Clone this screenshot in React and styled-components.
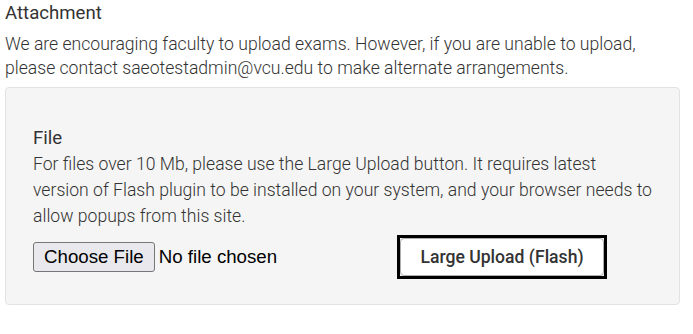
import React from "react";
import styled, { createGlobalStyle } from "styled-components";

const GlobalStyle = createGlobalStyle`
  body {
    margin: 0;
    background: #ffffff;
    font-family: Roboto, "Liberation Sans", sans-serif;
  }
`;

const Page = styled.div`
  padding: 0 5px;
  width: 675px;
`;

const Heading = styled.div`
  font-size: 18.6px;
  line-height: 26px;
  color: #333333;
`;

const Text = styled.p`
  margin: 6px 0 0;
  font-size: 17.6px;
  font-weight: 300;
  line-height: 24px;
  color: #333333;
`;

const Well = styled.div`
  margin-top: 7px;
  background: #f5f5f5;
  border: 1px solid #e3e3e3;
  border-radius: 4px;
  padding: 38px 27px 25px;
`;

const Label = styled.div`
  font-size: 18.6px;
  line-height: 24px;
  color: #333333;
`;

const Help = styled(Text)`
  margin-top: 1px;
  line-height: 26px;
`;

const UploadRow = styled.div`
  display: flex;
  align-items: center;
  margin-top: 6px;
`;

const FileField = styled.div`
  display: flex;
  align-items: center;
  width: 364px;
  font-family: "Liberation Sans", Arial, sans-serif;
  font-size: 18.7px;
  color: #000000;
`;

const ChooseButton = styled.button`
  font-family: inherit;
  font-size: 18.7px;
  color: #000000;
  background: #e9e9ed;
  border: 1px solid #767676;
  border-radius: 3px;
  height: 30px;
  padding: 0 10px;
  margin-right: 4px;
`;

const FocusRing = styled.div`
  border: 3px solid #000000;
  display: flex;
`;

const LargeButton = styled.button`
  font-family: Roboto, "Liberation Sans", sans-serif;
  font-size: 17.6px;
  font-weight: 500;
  color: #333333;
  background: #ffffff;
  border: 1px solid #adadad;
  border-radius: 4px;
  width: 204px;
  height: 38px;
  padding: 0;
`;

export default function App() {
  return (
    <>
      <GlobalStyle />
      <Page>
        <Heading>Attachment</Heading>
        <Text>
          We are encouraging faculty to upload exams. However, if you are unable to upload,
          please contact saeotestadmin@vcu.edu to make alternate arrangements.
        </Text>
        <Well>
          <Label>File</Label>
          <Help>
            For files over 10 Mb, please use the Large Upload button. It requires latest
            version of Flash plugin to be installed on your system, and your browser needs to
            allow popups from this site.
          </Help>
          <UploadRow>
            <FileField>
              <ChooseButton type="button">Choose File</ChooseButton>
              <span>No file chosen</span>
            </FileField>
            <FocusRing>
              <LargeButton type="button">Large Upload (Flash)</LargeButton>
            </FocusRing>
          </UploadRow>
        </Well>
      </Page>
    </>
  );
}
